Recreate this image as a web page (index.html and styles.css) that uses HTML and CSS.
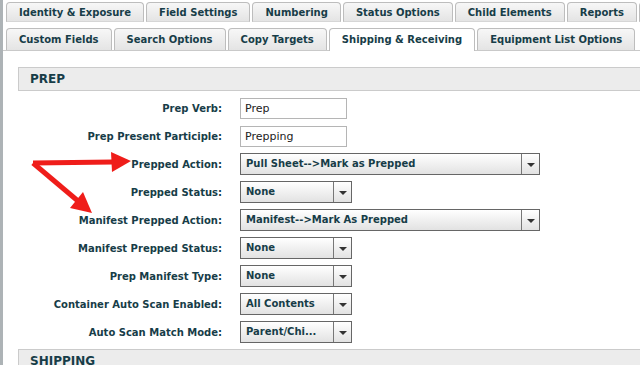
FILE: index.html
```html
<!DOCTYPE html>
<html lang="en">
<head>
    <meta charset="UTF-8">
    <title>Shipping &amp; Receiving</title>
    <link rel="stylesheet" href="styles.css">
</head>
<body>
    <div class="page">
        <div class="tab-row first-row">
            <div class="tab">Identity &amp; Exposure</div>
            <div class="tab">Field Settings</div>
            <div class="tab">Numbering</div>
            <div class="tab">Status Options</div>
            <div class="tab">Child Elements</div>
            <div class="tab">Reports</div>
            <div class="tab more"></div>
        </div>
        <div class="tab-row second-row">
            <div class="tab">Custom Fields</div>
            <div class="tab">Search Options</div>
            <div class="tab">Copy Targets</div>
            <div class="tab active">Shipping &amp; Receiving</div>
            <div class="tab">Equipment List Options</div>
        </div>

        <div class="panel">
            <div class="section-head">PREP</div>
            <div class="form">
                <label>Prep Verb:</label>
                <div><input type="text" class="text-input" value="Prep"></div>

                <label>Prep Present Participle:</label>
                <div><input type="text" class="text-input" value="Prepping"></div>

                <label>Prepped Action:</label>
                <div class="select wide"><span class="value">Pull Sheet--&gt;Mark as Prepped</span><span class="caret"></span></div>

                <label>Prepped Status:</label>
                <div class="select"><span class="value">None</span><span class="caret"></span></div>

                <label>Manifest Prepped Action:</label>
                <div class="select wide"><span class="value">Manifest--&gt;Mark As Prepped</span><span class="caret"></span></div>

                <label>Manifest Prepped Status:</label>
                <div class="select"><span class="value">None</span><span class="caret"></span></div>

                <label>Prep Manifest Type:</label>
                <div class="select"><span class="value">None</span><span class="caret"></span></div>

                <label>Container Auto Scan Enabled:</label>
                <div class="select"><span class="value">All Contents</span><span class="caret"></span></div>

                <label>Auto Scan Match Mode:</label>
                <div class="select"><span class="value">Parent/Chi...</span><span class="caret"></span></div>
            </div>
            <div class="section-head">SHIPPING</div>
        </div>
    </div>

    <!-- callout arrows drawn on top of the form -->
    <svg class="arrows" width="140" height="230" viewBox="0 0 140 230">
        <g fill="#ef1d1a" stroke="#ef1d1a">
            <line x1="33" y1="163" x2="113" y2="162" stroke-width="5" />
            <polygon points="111,152 131,161 112,172" stroke="none" />
            <line x1="33" y1="163" x2="78" y2="201" stroke-width="5" />
            <polygon points="83,192 92,213 70,208" stroke="none" />
        </g>
    </svg>
</body>
</html>
```

FILE: styles.css
```css
body {
    margin: 0;
    overflow: hidden;
    background: #fff;
    font-family: "DejaVu Sans", Verdana, sans-serif;
    color: #173d48;
}
.page {
    border-left: 3px solid #adb3b6;
    min-height: 365px;
}
.tab-row {
    display: flex;
    gap: 2px;
    padding-left: 3px;
    white-space: nowrap;
}
.first-row {
    padding-top: 2px;
    height: 20px;
}
.second-row {
    margin-top: 6px;
    height: 22px;
}
.tab {
    flex: none;
    padding: 0 12px;
    border: 1px solid #bdbdbd;
    border-bottom-color: #d6d6d6;
    border-radius: 4px 4px 0 0;
    background: linear-gradient(#f7f7f7, #e4e4e4);
    font-size: 10px;
    font-weight: bold;
    line-height: 19px;
}
.tab.more {
    width: 60px;
}
.second-row .tab {
    line-height: 21px;
    border-bottom: none;
}
.tab.active {
    background: #fff;
    height: 22px;
    position: relative;
    z-index: 1;
}
.panel {
    border-top: 1px solid #c9c9c9;
    padding-top: 16px;
}
.section-head {
    margin-left: 15px;
    margin-right: -4px;
    height: 22px;
    border: 1px solid #cbcbcb;
    background: #ececec;
    padding-left: 11px;
    font-size: 12px;
    font-weight: bold;
    line-height: 22px;
}
.form {
    display: grid;
    grid-template-columns: 219px 1fr;
    grid-auto-rows: 28px;
    column-gap: 18px;
    align-items: center;
    padding-top: 3px;
    margin-bottom: 3px;
}
.form label {
    text-align: right;
    font-size: 10px;
    font-weight: bold;
}
.text-input {
    display: block;
    box-sizing: border-box;
    width: 107px;
    height: 21px;
    margin: 0;
    padding: 0 4px;
    border: 1px solid #b5b5b5;
    font-family: "DejaVu Sans", Verdana, sans-serif;
    font-size: 11px;
    color: #222;
    outline: none;
}
.select {
    display: flex;
    box-sizing: border-box;
    width: 112px;
    height: 22px;
    border: 1px solid #666;
    background: linear-gradient(#fff, #e2e2e2);
    font-size: 10px;
    font-weight: bold;
    line-height: 20px;
}
.select.wide {
    width: 300px;
}
.select .value {
    flex: 1;
    padding-left: 5px;
    overflow: hidden;
}
.select .caret {
    flex: none;
    width: 17px;
    border-left: 1px solid #777;
    position: relative;
}
.select .caret::after {
    content: "";
    position: absolute;
    left: 5px;
    top: 9px;
    border-left: 4px solid transparent;
    border-right: 4px solid transparent;
    border-top: 4px solid #333;
}
.arrows {
    position: absolute;
    left: 0;
    top: 0;
}
```
